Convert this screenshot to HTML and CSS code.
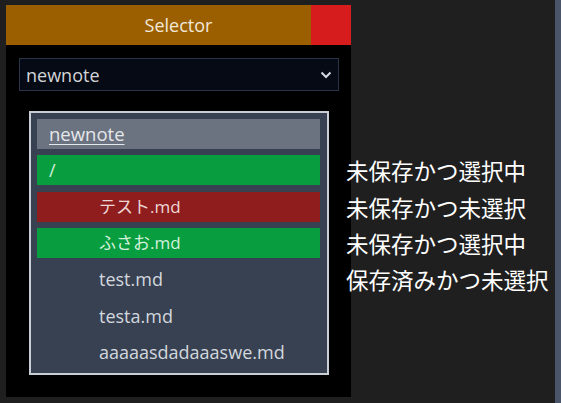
FILE: index.html
```html
<!DOCTYPE html>
<html lang="ja">
<head>
<meta charset="utf-8">
<title>Selector</title>
<link rel="stylesheet" href="styles.css">
</head>
<body>
<div class="panel">
  <div class="titlebar">
    <span class="title">Selector</span>
    <div class="close"></div>
  </div>
  <div class="content">
    <div class="select">
      <span class="select-value">newnote</span>
      <svg class="chevron" width="12" height="8" viewBox="0 0 12 8"><path d="M1.5 1.5 L6 6 L10.5 1.5" fill="none" stroke="#d4d8e0" stroke-width="2"/></svg>
    </div>
    <div class="listbox">
      <div class="row header"><span class="ul">newnote</span></div>
      <div class="row dir green">/<span class="note">未保存かつ選択中</span></div>
      <div class="row file jp red">テスト.md<span class="note">未保存かつ未選択</span></div>
      <div class="row file jp green">ふさお.md<span class="note">未保存かつ選択中</span></div>
      <div class="row file">test.md<span class="note">保存済みかつ未選択</span></div>
      <div class="row file">testa.md</div>
      <div class="row file">aaaaasdadaaaswe.md</div>
    </div>
  </div>
</div>
<div class="spacer"></div>
<div class="strip"></div>
</body>
</html>
```
FILE: styles.css
```css
html, body {
  margin: 0;
  padding: 0;
  height: 100%;
}
body {
  background: #1f1f1f;
  display: flex;
  align-items: flex-start;
  font-family: "Open Sans", "Noto Sans CJK JP", sans-serif;
  overflow: hidden;
}
.panel {
  margin: 5px 0 0 6px;
  width: 345px;
  height: 392px;
  background: #000;
  display: flex;
  flex-direction: column;
}
.titlebar {
  position: relative;
  height: 40px;
  background: #9b5f00;
  display: flex;
  align-items: center;
  justify-content: center;
}
.title {
  color: #f1e8da;
  font-size: 18px;
  line-height: 24px;
}
.close {
  position: absolute;
  top: 0;
  right: 0;
  width: 40px;
  height: 40px;
  background: #d71c1d;
}
.content {
  padding: 13px 12px 0 13px;
  display: flex;
  flex-direction: column;
}
.select {
  height: 33px;
  box-sizing: border-box;
  border: 1px solid #2b3446;
  background: #060a14;
  display: flex;
  align-items: center;
  justify-content: space-between;
  padding: 0 6px 0 6px;
}
.select-value {
  color: #d2d4d8;
  font-size: 18px;
  line-height: 24px;
}
.chevron {
  margin-top: 1px;
}
.listbox {
  margin: 20px 0 0 10px;
  width: 300px;
  box-sizing: border-box;
  border: 2px solid #c9cdd6;
  background: #374151;
  padding: 6px 7px 6px 6px;
  display: flex;
  flex-direction: column;
  gap: 6.33px;
}
.row {
  position: relative;
  height: 30px;
  display: flex;
  align-items: center;
  font-size: 18px;
  line-height: 22px;
  color: #d3d7de;
  white-space: nowrap;
}
.row.jp {
  font-size: 17px;
}
.header {
  background: #6b7280;
  padding-left: 12px;
  color: #e5e7eb;
  font-size: 18.5px;
}
.ul {
  text-decoration: underline;
  text-underline-offset: 3px;
}
.dir {
  padding-left: 12px;
}
.file {
  padding-left: 62px;
}
.green {
  background: #089e3f;
  color: #d4f0dc;
}
.red {
  background: #8f1d1d;
  color: #ecd6d6;
}
.note {
  position: absolute;
  left: calc(100% + 26px);
  top: 50%;
  transform: translateY(-50%);
  font-family: "Noto Sans CJK JP", sans-serif;
  font-size: 22.5px;
  line-height: 28px;
  color: #ffffff;
}
.spacer {
  flex: 1;
}
.strip {
  width: 6px;
  height: 100%;
  background: #4b5569;
}
```
